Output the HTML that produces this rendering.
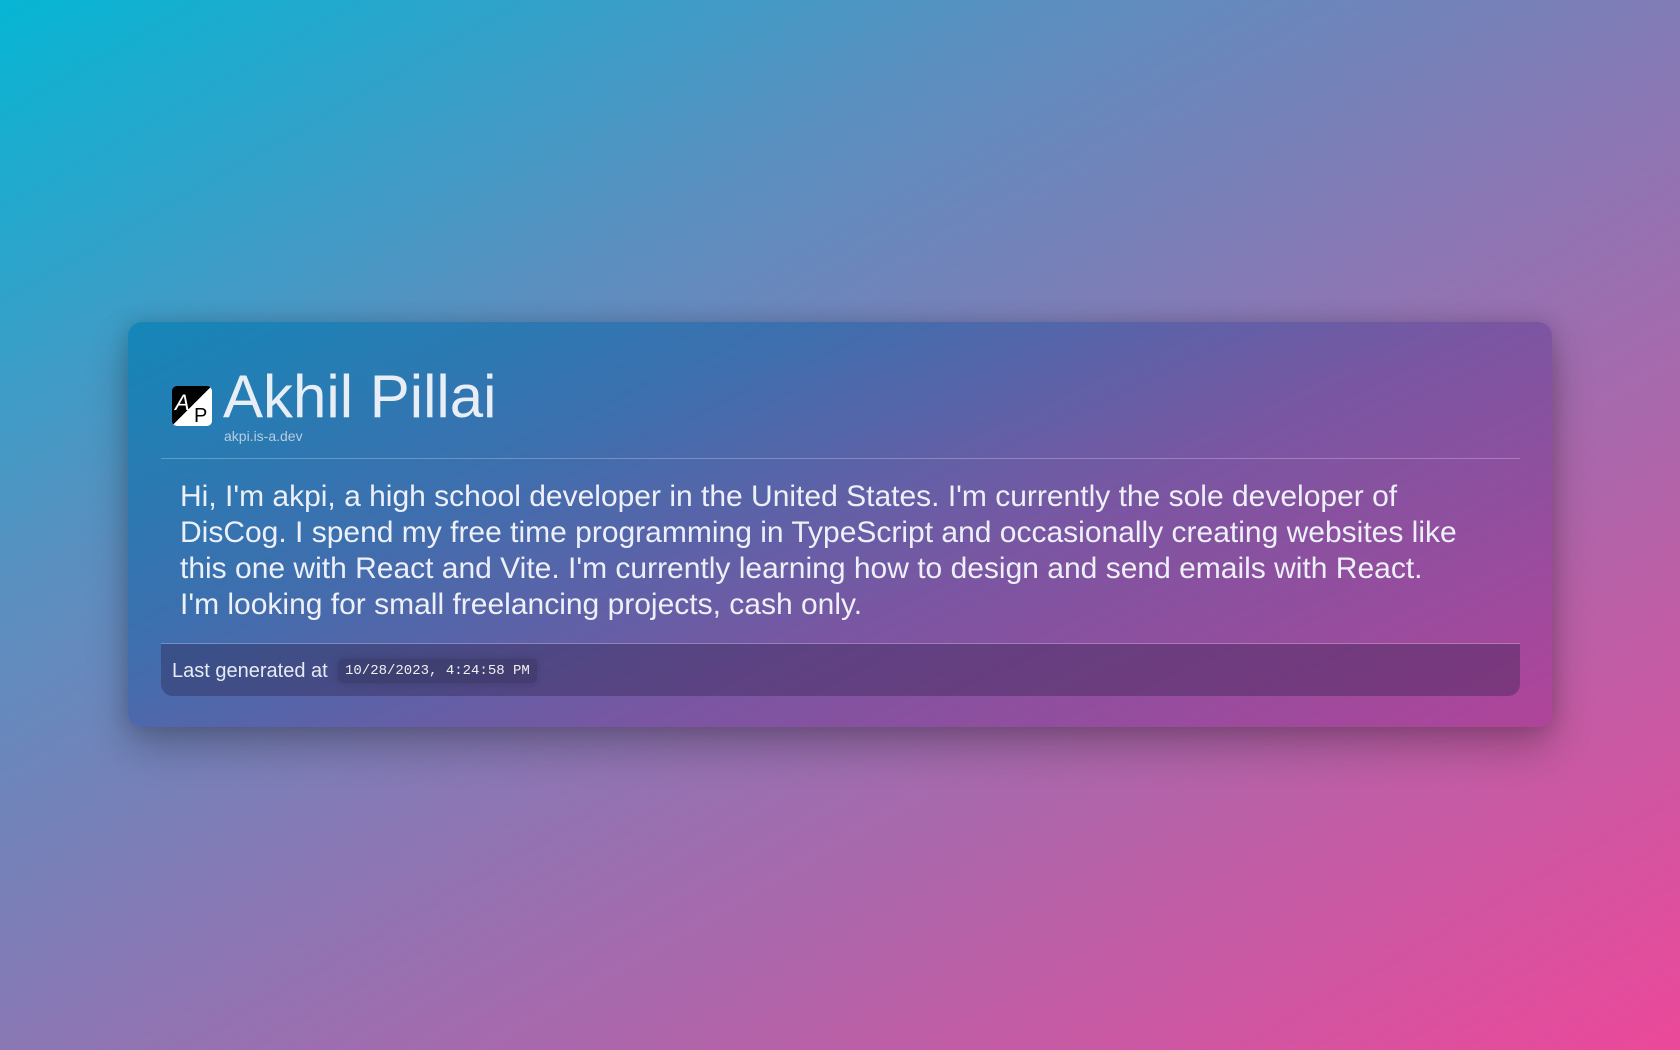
<!DOCTYPE html>
<html><head><style>
html,body{margin:0;width:1680px;height:1050px;overflow:hidden}
body{background:linear-gradient(150deg,#06b6d4 0%,#5b8fc0 30%,#9a6fb0 60%,#ec4899 100%);font-family:"Liberation Sans",sans-serif;position:relative}
.card{position:absolute;left:128px;top:322px;width:1424px;height:405px;border-radius:14px;
background:linear-gradient(155deg,#1487b8 0%,#3d6fae 30%,#7a56a2 60%,#b0449a 100%);
box-shadow:0 20px 40px rgba(0,0,0,.25),0 0 20px rgba(0,0,0,.15)}
.logo{position:absolute;left:44px;top:64px;width:40px;height:40px;border-radius:5px;overflow:hidden;background:linear-gradient(135deg,#000 50%,#fff 50%)}
.title{position:absolute;left:95px;top:40px;font-size:60px;color:#e8eef5;line-height:70px}
.sub{position:absolute;left:96px;top:106px;font-size:14px;color:#b8cde0}
.hr{position:absolute;left:33px;width:1359px;height:1px;background:rgba(255,255,255,.25)}
.body{position:absolute;left:52px;top:157px;width:1282px;font-size:30px;line-height:36px;color:#eef0f8}
.foot{position:absolute;left:33px;top:322px;width:1359px;height:52px;border-radius:0 0 12px 12px;background:rgba(40,30,70,.35)}
.foot .t{position:absolute;left:11px;top:16px;font-size:20px;color:#e6ecf5}
.foot .c{position:absolute;left:177px;top:15px;padding:4px 7px;font-family:"Liberation Mono",monospace;font-size:14px;color:#f0f0f0;background:rgba(40,40,70,.3);border-radius:5px;box-shadow:0 0 8px rgba(0,0,0,.15)}
</style></head><body>
<div class="card">
<div class="logo"><svg width="40" height="40"><text x="3" y="24" font-size="22" fill="#fff" font-style="italic" font-family="Liberation Sans">A</text><text x="22" y="36" font-size="20" fill="#000" font-family="Liberation Sans">P</text></svg></div>
<div class="title">Akhil Pillai</div>
<div class="sub">akpi.is-a.dev</div>
<div class="hr" style="top:136px"></div>
<div class="body">Hi, I'm akpi, a high school developer in the United States. I'm currently the sole developer of DisCog. I spend my free time programming in TypeScript and occasionally creating websites like this one with React and Vite. I'm currently learning how to design and send emails with React.<br>I'm looking for small freelancing projects, cash only.</div>
<div class="hr" style="top:321px"></div>
<div class="foot"><span class="t">Last generated at</span><span class="c">10/28/2023, 4:24:58 PM</span></div>
</div>
</body></html>
